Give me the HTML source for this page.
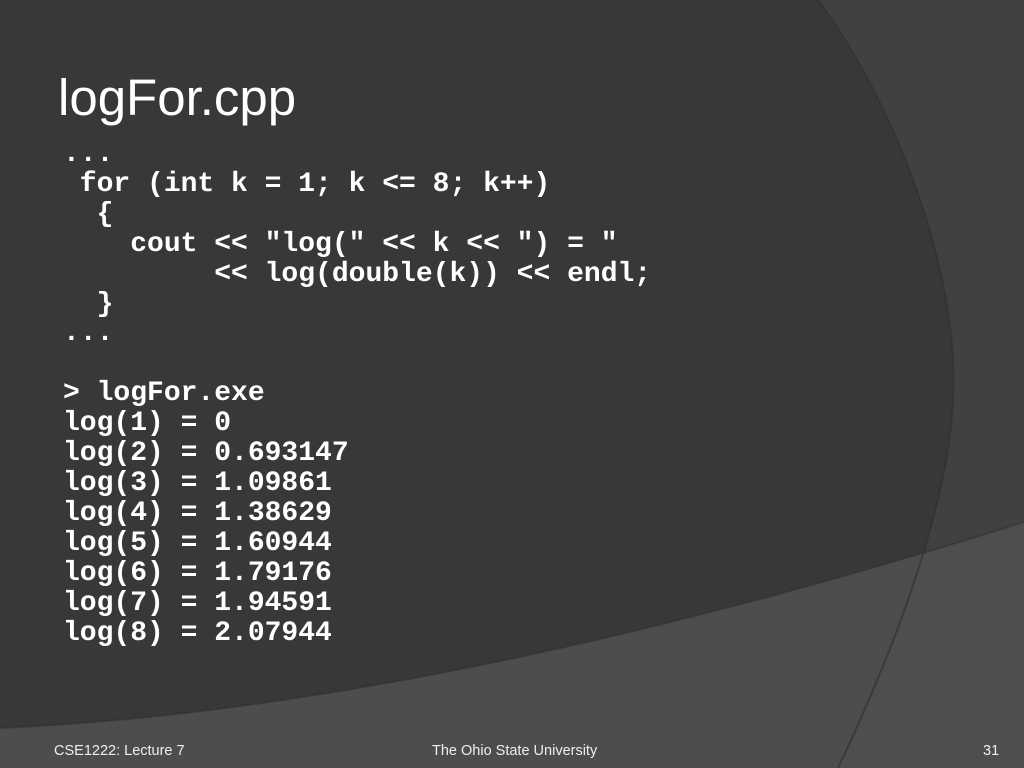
<!DOCTYPE html>
<html><head><meta charset="utf-8"><style>
html,body{margin:0;padding:0;}
body{width:1024px;height:768px;position:relative;overflow:hidden;background:#414141;font-family:"Liberation Sans",sans-serif;color:#fff;}
svg{position:absolute;left:0;top:0;}
h1{position:absolute;left:58px;top:68px;margin:0;font-weight:normal;font-size:51px;line-height:60px;letter-spacing:0px;}
pre{position:absolute;left:63px;top:140px;margin:0;font-family:"Liberation Mono",monospace;font-weight:bold;font-size:28px;line-height:29.9px;color:#fff;}
.f{position:absolute;top:743px;font-size:14.5px;color:#eee;}
</style></head><body>
<svg width="1024" height="768">
<rect width="1024" height="768" fill="#414141"/>
<path d="M0 0 L818 0 C900 110 960 280 953 400 C948 520 880 680 838 768 L0 768 Z" fill="#383838"/>
<path d="M0 728 C300 715 650 640 1024 522 L1024 768 L0 768 Z" fill="#505050" fill-opacity="0.9"/>
<path d="M818 0 C900 110 960 280 953 400 C948 520 880 680 838 768" fill="none" stroke="#2e2e2e" stroke-width="2" opacity="0.6"/>
<path d="M0 728 C300 715 650 640 1024 522" fill="none" stroke="#2e2e2e" stroke-width="2" opacity="0.5"/>
</svg>
<h1>logFor.cpp</h1>
<pre>...
 for (int k = 1; k &lt;= 8; k++)
  {
    cout &lt;&lt; "log(" &lt;&lt; k &lt;&lt; ") = "
         &lt;&lt; log(double(k)) &lt;&lt; endl;
  }
...

&gt; logFor.exe
log(1) = 0
log(2) = 0.693147
log(3) = 1.09861
log(4) = 1.38629
log(5) = 1.60944
log(6) = 1.79176
log(7) = 1.94591
log(8) = 2.07944</pre>
<div class="f" style="left:54px">CSE1222: Lecture 7</div>
<div class="f" style="left:432px">The Ohio State University</div>
<div class="f" style="left:983px">31</div>
</body></html>
